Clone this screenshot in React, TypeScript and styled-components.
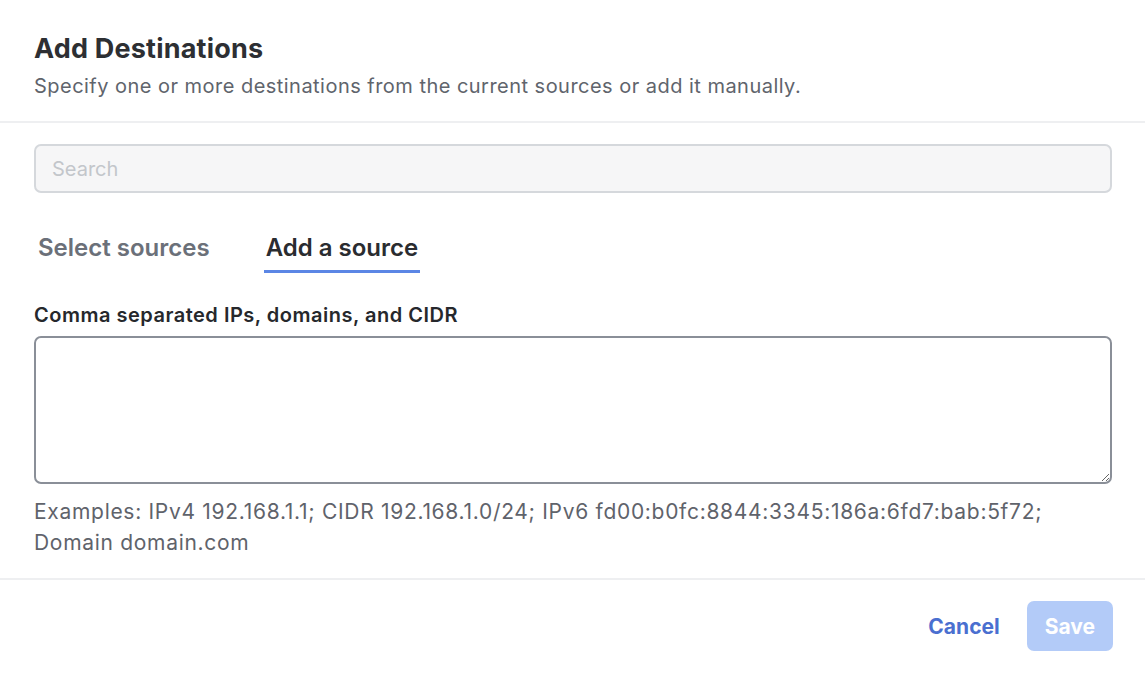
import React, { useState } from "react";
import styled, { createGlobalStyle } from "styled-components";

const Global = createGlobalStyle`
  html, body { margin: 0; padding: 0; background: #fff; }
  body { font-family: Inter, "Noto Sans", sans-serif; color: #2b2d31; }
  * { box-sizing: border-box; }
`;

const Dialog = styled.div`
  width: 1145px;
  height: 683px;
  background: #fff;
  display: flex;
  flex-direction: column;
`;

const Header = styled.header`
  padding: 33px 34px 0 34px;
  height: 123px;
  border-bottom: 2px solid #eeeff1;
`;

const Title = styled.h2`
  margin: 0;
  font-size: 27px;
  font-weight: 700;
  line-height: 32px;
  color: #2d2f33;
  letter-spacing: 0.2px;
`;

const Subtitle = styled.p`
  margin: 8px 0 0 0;
  font-size: 20px;
  line-height: 26px;
  color: #60646c;
  letter-spacing: 0.47px;
`;

const Body = styled.div`
  padding: 21px 33px 0 34px;
  display: flex;
  flex-direction: column;
`;

const SearchInput = styled.input`
  width: 100%;
  height: 49px;
  border: 2px solid #d5d8dc;
  border-radius: 7px;
  background: #f6f6f7;
  padding: 0 16px;
  font-family: inherit;
  font-size: 20px;
  color: #2b2d31;
  outline: none;
  &::placeholder { color: #c3c6cb; }
`;

const Tabs = styled.div`
  display: flex;
  gap: 52px;
  margin-top: 40px;
  padding-left: 2px;
`;

const Tab = styled.button<{ $active?: boolean }>`
  background: none;
  border: none;
  padding: 0 2px 7px 2px;
  font-family: inherit;
  font-size: 24px;
  font-weight: 600;
  line-height: 30px;
  color: ${(p) => (p.$active ? "#2a2c30" : "#6b7079")};
  border-bottom: 3px solid ${(p) => (p.$active ? "#5b86e5" : "transparent")};
  cursor: pointer;
`;

const Label = styled.label`
  display: block;
  margin-top: 30px;
  font-size: 20px;
  font-weight: 600;
  line-height: 24px;
  color: #26282c;
  letter-spacing: 0.5px;
`;

const TextArea = styled.textarea`
  margin-top: 9px;
  width: 100%;
  height: 148px;
  border: 2px solid #8a8f98;
  border-radius: 7px;
  font-family: inherit;
  font-size: 18px;
  padding: 10px 14px;
  outline: none;
  resize: vertical;
`;

const Help = styled.p`
  margin: 12px 0 0 0;
  font-size: 21px;
  line-height: 31px;
  color: #5f636b;
  letter-spacing: 0.7px;
`;

const Footer = styled.footer`
  margin-top: auto;
  height: 105px;
  border-top: 2px solid #eeeff1;
  display: flex;
  align-items: center;
  justify-content: flex-end;
  gap: 27px;
  padding: 0 32px 11px 0;
`;

const LinkButton = styled.button`
  background: none;
  border: none;
  font-family: inherit;
  font-size: 21px;
  font-weight: 700;
  color: #4a6fd0;
  cursor: pointer;
  padding: 0;
`;

const PrimaryButton = styled.button`
  height: 50px;
  padding: 0 18px;
  border: none;
  border-radius: 7px;
  background: #b3cbf8;
  color: #fff;
  font-family: inherit;
  font-size: 21px;
  font-weight: 700;
`;

export default function App() {
  const [tab, setTab] = useState(1);
  return (
    <>
      <Global />
      <Dialog>
        <Header>
          <Title>Add Destinations</Title>
          <Subtitle>Specify one or more destinations from the current sources or add it manually.</Subtitle>
        </Header>
        <Body>
          <SearchInput placeholder="Search" />
          <Tabs>
            <Tab $active={tab === 0} onClick={() => setTab(0)}>Select sources</Tab>
            <Tab $active={tab === 1} onClick={() => setTab(1)}>Add a source</Tab>
          </Tabs>
          <Label>Comma separated IPs, domains, and CIDR</Label>
          <TextArea />
          <Help>
            Examples: IPv4 192.168.1.1; CIDR 192.168.1.0/24; IPv6 fd00:b0fc:8844:3345:186a:6fd7:bab:5f72;
            <br />
            Domain domain.com
          </Help>
        </Body>
        <Footer>
          <LinkButton>Cancel</LinkButton>
          <PrimaryButton disabled>Save</PrimaryButton>
        </Footer>
      </Dialog>
    </>
  );
}
